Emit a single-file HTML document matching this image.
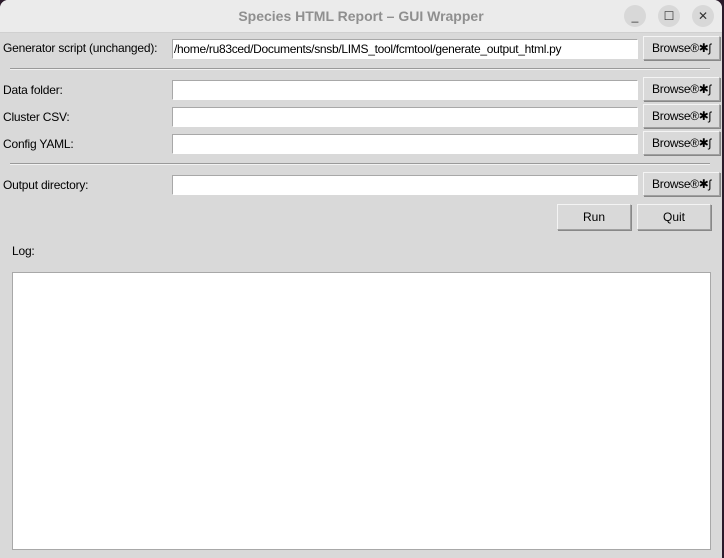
<html><head><style>
body{margin:0;width:724px;height:558px;background:#2a1a2a;overflow:hidden;font-family:"Liberation Sans",sans-serif;font-size:12px;color:#000}
.win{position:absolute;left:0;top:0;width:722px;height:558px;background:#d9d9d9;border-radius:8px 8px 0 0;overflow:hidden}
.tb{position:absolute;left:0;top:0;width:722px;height:32px;background:#ebebeb;border-bottom:1px solid #d0d0d0}
.title{position:absolute;left:0;width:722px;top:8px;text-align:center;font-family:"Liberation Sans",sans-serif;font-weight:bold;font-size:14px;color:#8f8f8f}
.cb{position:absolute;top:5px;width:22px;height:22px;border-radius:11px;background:#d8d8d8;font-size:12px;text-align:center;line-height:22px;color:#333}
.l{position:absolute;left:3px;letter-spacing:-0.2px}
.e{position:absolute;left:172px;width:463px;height:18px;background:#fff;border:1px solid #a8a8a8;border-right-color:#fff;border-bottom-color:#fff;box-sizing:content-box;font-size:12px;line-height:18px;padding-left:1px;letter-spacing:-0.3px}
.b{position:absolute;background:#d9d9d9;border:1px solid #a0a0a0;border-top-color:#f4f4f4;border-left-color:#f4f4f4;box-shadow:1px 1px 0 #888;text-align:center;font-size:12px}
.br{left:643px;width:75px;height:22px;line-height:22px;letter-spacing:-0.3px}
.sep{position:absolute;left:10px;width:700px;height:1px;background:#9a9a9a;border-bottom:1px solid #f2f2f2}
</style></head><body><div class="win">
<div class="tb"><div class="title">Species HTML Report – GUI Wrapper</div>
<div class="cb" style="left:624px">_</div><div class="cb" style="left:658px">☐</div><div class="cb" style="left:692px">✕</div></div>
<div class="l" style="top:41px">Generator script (unchanged):</div>
<div class="e" style="top:39px">/home/ru83ced/Documents/snsb/LIMS_tool/fcmtool/generate_output_html.py</div>
<div class="b br" style="top:36px">Browse®✱ʃ</div>
<div class="sep" style="top:68px"></div>
<div class="l" style="top:83px">Data folder:</div><div class="e" style="top:80px"></div><div class="b br" style="top:77px">Browse®✱ʃ</div>
<div class="l" style="top:110px">Cluster CSV:</div><div class="e" style="top:107px"></div><div class="b br" style="top:104px">Browse®✱ʃ</div>
<div class="l" style="top:137px">Config YAML:</div><div class="e" style="top:134px"></div><div class="b br" style="top:131px">Browse®✱ʃ</div>
<div class="sep" style="top:163px"></div>
<div class="l" style="top:178px">Output directory:</div><div class="e" style="top:175px"></div><div class="b br" style="top:172px">Browse®✱ʃ</div>
<div class="b" style="left:557px;top:204px;width:72px;height:24px;line-height:24px">Run</div>
<div class="b" style="left:637px;top:204px;width:72px;height:24px;line-height:24px">Quit</div>
<div class="l" style="left:12px;top:244px">Log:</div>
<div style="position:absolute;left:12px;top:272px;width:697px;height:276px;background:#fff;border:1px solid #a8a8a8"></div>
</div></body></html>
